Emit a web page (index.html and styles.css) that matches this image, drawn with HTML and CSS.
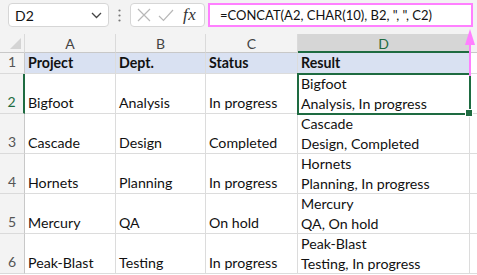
FILE: index.html
```html
<!DOCTYPE html>
<html>
<head>
<meta charset="utf-8">
<link rel="stylesheet" href="styles.css">
</head>
<body>
<div class="app">
  <div class="toolbar">
    <div class="namebox">
      <span class="name">D2</span>
      <svg class="chev" width="11" height="7" viewBox="0 0 11 7"><path d="M1 1 L5.5 5.5 L10 1" fill="none" stroke="#444" stroke-width="1.3"/></svg>
    </div>
    <div class="dots">
      <svg width="3" height="13" viewBox="0 0 3 13"><circle cx="1.5" cy="1.5" r="1.1" fill="#777"/><circle cx="1.5" cy="6.5" r="1.1" fill="#777"/><circle cx="1.5" cy="11.5" r="1.1" fill="#777"/></svg>
    </div>
    <div class="fxbox">
      <svg class="ico" width="14" height="14" viewBox="0 0 14 14"><path d="M1 1 L13 13 M13 1 L1 13" stroke="#b8b8b8" stroke-width="1.2" fill="none"/></svg>
      <svg class="ico" width="16" height="13" viewBox="0 0 16 13"><path d="M1 7 L5.5 11.5 L15 1" stroke="#b8b8b8" stroke-width="1.2" fill="none"/></svg>
      <span class="fx">fx</span>
    </div>
    <div class="formula">=CONCAT(A2, CHAR(10), B2, ", ", C2)</div>
  </div>
  <div class="sheet">
    <div class="corner"><span class="tri"></span></div>
    <div class="colh">A</div>
    <div class="colh">B</div>
    <div class="colh">C</div>
    <div class="colh sel">D</div>
    <div class="colh last"></div>

    <div class="rowh">1</div>
    <div class="cell head">Project</div>
    <div class="cell head">Dept.</div>
    <div class="cell head">Status</div>
    <div class="cell head">Result</div>
    <div class="cell blank"></div>

    <div class="rowh selr">2</div>
    <div class="cell">Bigfoot</div>
    <div class="cell">Analysis</div>
    <div class="cell">In progress</div>
    <div class="cell res active">Bigfoot<br>Analysis, In progress<span class="handle"></span></div>
    <div class="cell blank"></div>

    <div class="rowh">3</div>
    <div class="cell">Cascade</div>
    <div class="cell">Design</div>
    <div class="cell">Completed</div>
    <div class="cell res">Cascade<br>Design, Completed</div>
    <div class="cell blank"></div>

    <div class="rowh">4</div>
    <div class="cell">Hornets</div>
    <div class="cell">Planning</div>
    <div class="cell">In progress</div>
    <div class="cell res">Hornets<br>Planning, In progress</div>
    <div class="cell blank"></div>

    <div class="rowh">5</div>
    <div class="cell">Mercury</div>
    <div class="cell">QA</div>
    <div class="cell">On hold</div>
    <div class="cell res">Mercury<br>QA, On hold</div>
    <div class="cell blank"></div>

    <div class="rowh">6</div>
    <div class="cell">Peak-Blast</div>
    <div class="cell">Testing</div>
    <div class="cell">In progress</div>
    <div class="cell res">Peak-Blast<br>Testing, In progress</div>
    <div class="cell blank"></div>
  </div>
  <svg class="arrow" width="12" height="48" viewBox="0 0 12 48"><path d="M6 8 L6 48" stroke="#ff80ff" stroke-width="2"/><path d="M1 17 L6 1 L11 17 Z" fill="#ff80ff"/></svg>
</div>
</body>
</html>
```
FILE: styles.css
```css
* { box-sizing: border-box; }
html, body { margin: 0; padding: 0; background: #fff; }
.app {
  position: relative;
  width: 477px;
  height: 275px;
  overflow: hidden;
  font-family: Lato, "Liberation Sans", sans-serif;
  color: #111;
}
.toolbar {
  height: 34px;
  background: #f3f3f3;
  display: flex;
  align-items: flex-start;
  padding: 3px 0 0 8px;
}
.namebox {
  width: 101px;
  height: 24px;
  background: #fff;
  border: 1px solid #d6d6d6;
  border-radius: 4px;
  display: flex;
  align-items: center;
  justify-content: space-between;
  padding: 0 6px 0 6px;
  font-size: 14px;
}
.chev { margin-top: 1px; }
.dots {
  width: 21px;
  height: 24px;
  display: flex;
  align-items: center;
  justify-content: center;
}
.fxbox {
  width: 75px;
  height: 24px;
  background: #fff;
  border: 1px solid #d6d6d6;
  border-radius: 4px;
  display: flex;
  align-items: center;
  padding: 0 0 0 6px;
  gap: 7px;
}
.fx {
  font-family: "Liberation Serif", serif;
  font-style: italic;
  font-size: 17px;
  color: #333;
  margin-left: 2px;
  letter-spacing: 0.5px;
}
.formula {
  margin-left: 3px;
  width: 265px;
  height: 24px;
  background: #fff;
  border: 2px solid #ff80ff;
  display: flex;
  align-items: center;
  padding-left: 10px;
  font-size: 13px;
  color: #111;
}
.sheet {
  display: grid;
  grid-template-columns: 25px 91px 90px 92px 172px 1fr;
  grid-template-rows: 19px 21px repeat(5, 40px);
}
.corner {
  background: #f3f3f3;
  border-right: 1px solid #dadada;
  border-bottom: 1px solid #c8c8c8;
  position: relative;
}
.tri {
  position: absolute;
  right: 3px;
  bottom: 3px;
  width: 0;
  height: 0;
  border-left: 11px solid transparent;
  border-bottom: 11px solid #d4d4d4;
}
.colh {
  background: #f3f3f3;
  border-right: 1px solid #dadada;
  border-bottom: 1px solid #c8c8c8;
  font-size: 14px;
  color: #444;
  display: flex;
  align-items: center;
  justify-content: center;
  padding-top: 1px;
}
.colh.sel {
  background: #d6d6d6;
  color: #1e6b41;
  border-bottom: 2px solid #1e6b41;
}
.colh.last { border-right: none; }
.rowh {
  background: #f3f3f3;
  border-right: 1px solid #c8c8c8;
  border-bottom: 1px solid #dadada;
  font-size: 14px;
  color: #555;
  display: flex;
  align-items: flex-end;
  justify-content: center;
  padding-bottom: 1px;
  line-height: 20px;
}
.rowh.selr {
  color: #1e6b41;
  border-right: 2px solid #1e6b41;
}
.cell {
  border-right: 1px solid #dcdcdc;
  border-bottom: 1px solid #dcdcdc;
  font-size: 14.2px;
  line-height: 20px;
  padding: 0 0 0 3px;
  display: flex;
  align-items: flex-end;
  white-space: nowrap;
}
.cell.head {
  background: #d9e1f2;
  font-weight: bold;
}
.cell.head + .cell.blank { background: #fff; }
.cell.res {
  display: block;
  padding-top: 0;
}
.cell.blank { border-right: none; }
.cell.active {
  position: relative;
  outline: 2px solid #1e6b41;
  outline-offset: -1px;
}
.handle {
  position: absolute;
  right: -4px;
  bottom: -4px;
  width: 6px;
  height: 6px;
  background: #1e6b41;
  border: 1px solid #fff;
  box-sizing: content-box;
}
.arrow {
  position: absolute;
  left: 464px;
  top: 28px;
}
```
